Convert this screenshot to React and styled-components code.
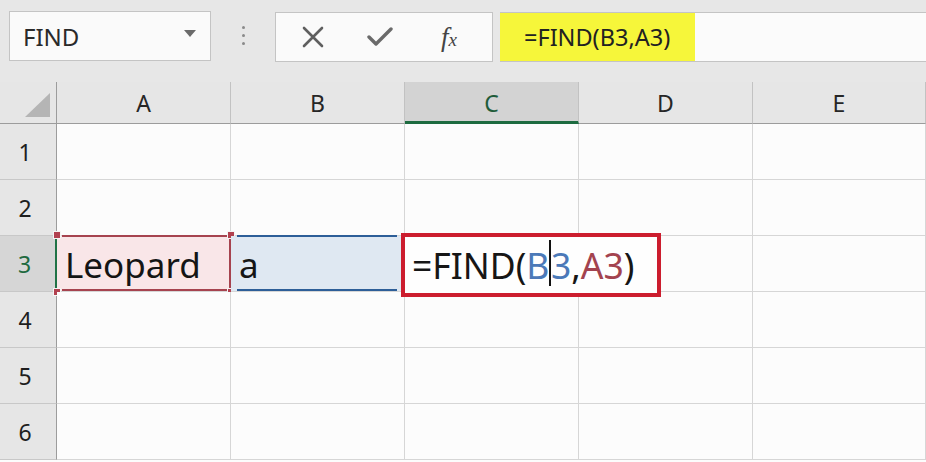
import React from "react";
import styled, { createGlobalStyle, css } from "styled-components";

const GlobalStyle = createGlobalStyle`
  html, body { margin: 0; padding: 0; background: #fcfcfc; }
  body { font-family: "Noto Sans", "Open Sans", sans-serif; overflow: hidden; }
  * { box-sizing: border-box; }
`;

const Page = styled.div`
  width: 926px;
  height: 462px;
  display: flex;
  flex-direction: column;
  overflow: hidden;
  background: #fcfcfc;
`;

const Toolbar = styled.div`
  height: 82px;
  flex: none;
  display: flex;
  align-items: flex-start;
  padding: 11px 0 0 9px;
  background: #e7e7e7;
`;

const NameBox = styled.div`
  width: 202px;
  height: 50px;
  background: #fafafa;
  border: 1px solid #c4c4c4;
  display: flex;
  align-items: center;
  justify-content: space-between;
  padding: 0 14px 0 13px;
  font-size: 24px;
  color: #2a2a2a;
`;

const Caret = styled.span`
  width: 0;
  height: 0;
  border-left: 6px solid transparent;
  border-right: 6px solid transparent;
  border-top: 7px solid #6a6a6a;
  margin-top: -6px;
`;

const Grip = styled.div`
  width: 64px;
  height: 50px;
  display: flex;
  flex-direction: column;
  align-items: center;
  justify-content: center;
  gap: 5px;
  padding-bottom: 2px;
  & > span {
    width: 3px;
    height: 3px;
    border-radius: 50%;
    background: #8a8a8a;
  }
`;

const FxButtons = styled.div`
  width: 218px;
  height: 50px;
  margin-top: 1px;
  background: #fafafa;
  border: 1px solid #c4c4c4;
  display: flex;
  align-items: center;
  padding-left: 25px;
`;

const IconSlot = styled.div`
  width: ${(p) => p.$w}px;
  display: flex;
  align-items: center;
`;

const FxText = styled.span`
  font-family: "Liberation Serif", "DejaVu Serif", serif;
  font-style: italic;
  color: #444;
  font-size: 27px;
  line-height: 1;
  margin-left: 4px;
  & > small {
    font-size: 19px;
    margin-left: 0px;
  }
`;

const FormulaBar = styled.div`
  flex: 1;
  height: 50px;
  margin-top: 1px;
  margin-left: 7px;
  background: #fbfbfb;
  border-top: 1px solid #c4c4c4;
  border-bottom: 1px solid #c4c4c4;
  display: flex;
`;

const Highlight = styled.div`
  width: 195px;
  height: 100%;
  background: #f6f63a;
  display: flex;
  align-items: center;
  padding-left: 24px;
  font-size: 23.5px;
  color: #222;
`;

const Sheet = styled.div`
  flex: 1;
  display: grid;
  grid-template-columns: 57px repeat(4, 174px) 1fr;
  grid-template-rows: 42px repeat(6, 56px);
`;

const Corner = styled.div`
  background: #e6e6e6;
  border-right: 1px solid #9c9c9c;
  border-bottom: 1px solid #9c9c9c;
  display: flex;
  align-items: flex-end;
  justify-content: flex-end;
  padding: 0 6px 6px 0;
  & > span {
    width: 0;
    height: 0;
    border-left: 25px solid transparent;
    border-bottom: 24px solid #b5b5b5;
  }
`;

const ColHead = styled.div`
  background: ${(p) => (p.$active ? "#d3d3d3" : "#e6e6e6")};
  border-right: 1px solid #c2c2c2;
  border-bottom: ${(p) => (p.$active ? "3px solid #1d6b40" : "1px solid #9c9c9c")};
  display: flex;
  align-items: center;
  justify-content: center;
  padding-top: ${(p) => (p.$active ? "2px" : "0")};
  font-size: 23px;
  color: ${(p) => (p.$active ? "#1f5c3a" : "#262626")};
`;

const RowHead = styled.div`
  background: ${(p) => (p.$active ? "#d6d6d6" : "#e6e6e6")};
  border-bottom: 1px solid #c8c8c8;
  border-right: ${(p) => (p.$active ? "2px solid #217346" : "1px solid #9c9c9c")};
  display: flex;
  align-items: center;
  justify-content: center;
  padding-right: 6px;
  font-size: 23px;
  color: ${(p) => (p.$active ? "#1f6a40" : "#1e1e1e")};
`;

const rangeTint = {
  red: { bg: "#f9e6e8", line: "#a6434f" },
  blue: { bg: "#dfe8f2", line: "#2d5e98" },
};

const Cell = styled.div`
  position: relative;
  background: ${(p) => (p.$range ? rangeTint[p.$range].bg : "#fcfcfc")};
  border-right: 1px solid #d6d6d6;
  border-bottom: 1px solid #d6d6d6;
  display: flex;
  align-items: center;
  padding-left: 8px;
  font-size: 35px;
  color: #151515;
  white-space: nowrap;
  ${(p) => p.$front && css`z-index: 2;`}
`;

const CellText = styled.span`
  position: relative;
  z-index: 1;
  padding-top: 2px;
`;

const RangeFrame = styled.div`
  position: absolute;
  top: -1px;
  left: ${(p) => p.$left}px;
  right: ${(p) => (p.$sides ? -1 : 7)}px;
  bottom: 0;
  border-top: 2px solid ${(p) => rangeTint[p.$range].line};
  border-bottom: 2px solid ${(p) => rangeTint[p.$range].line};
  border-right: ${(p) => (p.$sides ? `2px solid ${rangeTint[p.$range].line}` : "none")};
  pointer-events: none;
`;

const Handle = styled.span`
  position: absolute;
  width: 8px;
  height: 8px;
  background: #b1414f;
  border: 1px solid #f4f4f4;
  ${(p) => (p.$top ? "top: -5px;" : "bottom: -5px;")}
  ${(p) => (p.$leftSide ? "left: -4px;" : "right: -5px;")}
`;

const Callout = styled.div`
  position: absolute;
  left: -4px;
  top: -3px;
  width: 260px;
  height: 64px;
  border: 4px solid #cc1d2e;
  background: #fefefe;
  display: flex;
  align-items: center;
  padding-left: 7px;
  font-size: 35.5px;
  color: #161616;
`;

const Ref = styled.span`
  color: ${(p) => (p.$c === "blue" ? "#4b79b8" : "#a3434f")};
`;

const CursorBar = styled.span`
  display: inline-block;
  width: 1.5px;
  height: 46px;
  background: #111;
  vertical-align: middle;
  margin: -4px 0 0 0;
`;

function XIcon() {
  return (
    <svg width="24" height="24" viewBox="0 0 24 24" fill="none">
      <path d="M3 3 L21 21 M21 3 L3 21" stroke="#5f5f5f" strokeWidth="2.6" strokeLinecap="round" />
    </svg>
  );
}

function CheckIcon() {
  return (
    <svg width="26" height="22" viewBox="0 0 26 22" fill="none">
      <path d="M2 11 L9 18 L24 3" stroke="#6a6a6a" strokeWidth="3.4" strokeLinecap="round" strokeLinejoin="round" />
    </svg>
  );
}

const columns = ["A", "B", "C", "D", "E"];
const rows = [1, 2, 3, 4, 5, 6];

export default function App() {
  return (
    <Page>
      <GlobalStyle />
      <Toolbar>
        <NameBox>
          <span>FIND</span>
          <Caret />
        </NameBox>
        <Grip>
          <span />
          <span />
          <span />
        </Grip>
        <FxButtons>
          <IconSlot $w={66}>
            <XIcon />
          </IconSlot>
          <IconSlot $w={70}>
            <CheckIcon />
          </IconSlot>
          <IconSlot $w={50}>
            <FxText>
              f<small>x</small>
            </FxText>
          </IconSlot>
        </FxButtons>
        <FormulaBar>
          <Highlight>=FIND(B3,A3)</Highlight>
        </FormulaBar>
      </Toolbar>
      <Sheet>
        <Corner>
          <span />
        </Corner>
        {columns.map((c) => (
          <ColHead key={c} $active={c === "C"}>
            {c}
          </ColHead>
        ))}
        {rows.map((r) => (
          <React.Fragment key={r}>
            <RowHead $active={r === 3}>{r}</RowHead>
            {columns.map((c) => {
              if (r === 3 && c === "A") {
                return (
                  <Cell key={c} $range="red">
                    <RangeFrame $range="red" $left={5} $sides />
                    <Handle $top $leftSide />
                    <Handle $top />
                    <Handle $leftSide />
                    <Handle />
                    <CellText>Leopard</CellText>
                  </Cell>
                );
              }
              if (r === 3 && c === "B") {
                return (
                  <Cell key={c} $range="blue">
                    <RangeFrame $range="blue" $left={6} />
                    <CellText>a</CellText>
                  </Cell>
                );
              }
              if (r === 3 && c === "C") {
                return (
                  <Cell key={c} $front>
                    <Callout>
                      =FIND(<Ref $c="blue">B</Ref>
                      <CursorBar />
                      <Ref $c="blue">3</Ref>,<Ref $c="red">A3</Ref>)
                    </Callout>
                  </Cell>
                );
              }
              return <Cell key={c} />;
            })}
          </React.Fragment>
        ))}
      </Sheet>
    </Page>
  );
}
